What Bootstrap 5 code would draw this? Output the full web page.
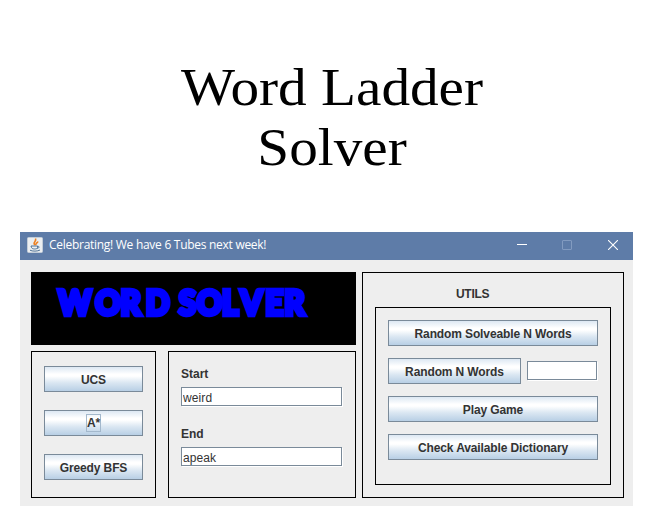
<!DOCTYPE html>
<html lang="en">
<head>
<meta charset="utf-8">
<meta name="viewport" content="width=device-width, initial-scale=1">
<title>Word Ladder Solver</title>
<link href="https://cdn.jsdelivr.net/npm/bootstrap@5.3.0/dist/css/bootstrap.min.css" rel="stylesheet">
<style>
body{background:#fff;color:#333;font:bold 12px/14px "Liberation Sans",Arial,sans-serif;overflow:hidden}
.page-title{font:400 53px/60px "Liberation Serif","Times New Roman",serif;color:#000;padding:57px 0 0 1px;height:232px;transform:scaleX(1.08)}
.app-window{width:613px;height:274px;margin-left:20px;background:#eee}
.title-bar{height:28px;background:#5e7ca8;color:#fff;font:400 12px/26px "Open Sans","Noto Sans",sans-serif;padding:0 15px 2px 7px}
.caption-text{letter-spacing:-.28px;margin-left:6px}
.win-controls{gap:35px}
.app-body{padding:12px 9px 8px 11px;gap:6px}
.left-side{width:325px;gap:6px}
.banner{height:73px;background:#000}
.frame{border:1px solid #000}
.algos{width:125px;height:147px;padding:14px 12px;gap:18px}
.words{width:188px;height:147px;padding:15px 12px 0}
.field-label{display:block;height:20px}
.utils{width:262px;height:226px;padding:14px 12px 12px}
.utils-head{height:20px;padding-left:81px;letter-spacing:-.3px}
.utils-inner{height:178px;padding:12px;gap:12px}
.swing-btn{height:26px;padding:1px 0 0;border:1px solid #7a8a99;border-radius:0;color:#333;font:bold 12px/24px "Liberation Sans",Arial,sans-serif;letter-spacing:-.12px;
background:linear-gradient(#dde8f3 0,#fff 30%,#fff 38%,#dbe7f2 65%,#b8cfe5 100%)}
.focus-box{display:inline-block;border:1px solid #a3b8cc;height:18px;line-height:16px;vertical-align:middle;margin-top:-3px}
.swing-input{height:19px;width:161px;padding:2px 1px 0;border:1px solid #7a8a99;border-radius:0;background:#fff;color:#333;font:400 12px/15px "Liberation Sans",Arial,sans-serif;box-shadow:1px 1px 0 #fff;letter-spacing:.1px}
.swing-input + .field-label{margin-top:21px}
.n-input{width:70px;margin:3px 1px 0 0}
.n-btn{width:133px}
</style>
</head>
<body>
<h1 class="page-title text-center m-0">Word Ladder<br>Solver</h1>
<main class="app-window">
  <header class="title-bar d-flex align-items-center">
    <svg width="16" height="16" viewBox="0 0 16 16" aria-hidden="true">
      <rect x=".5" y=".5" width="15" height="15" rx="1" fill="#eceff1" stroke="#c3cdd8"/>
      <path d="M8 8C5 5.500 10 4.500 8.500 1.500M9 8.200C8 6.600 10.500 6 11 4.500" fill="none" stroke="#ee8122" stroke-width="1.600"/>
      <path d="M4 9h6.500v1.500c0 2-5.500 2-6 0zM10.500 9.300c2.500-.3 2 2-.5 2M3 13.200c2 1.300 8 1.200 10-.2" fill="none" stroke="#507397"/>
    </svg>
    <span class="caption-text">Celebrating! We have 6 Tubes next week!</span>
    <div class="win-controls d-flex ms-auto">
      <svg width="11" height="10" viewBox="0 0 11 10"><path d="M1 4.500h10" stroke="#fff"/></svg>
      <svg width="11" height="10" viewBox="0 0 11 10"><rect x=".5" y=".5" width="9" height="9" rx=".5" fill="none" stroke="#829bc0"/></svg>
      <svg width="10" height="10" viewBox="0 0 10 10"><path d="M0 0l10 10M10 0L0 10" stroke="#fff" stroke-width="1.100"/></svg>
    </div>
  </header>
  <div class="app-body d-flex">
    <div class="left-side d-flex flex-column">
      <div class="banner">
        <svg class="d-block" width="325" height="73" viewBox="0 0 325 73">
          <text transform="scale(.92 1)" y="43.500" x="30 70 97.500 125 149 161 180.500 208 228 255 275.500" font-family="Lato,sans-serif" font-weight="900" font-size="34" fill="#00f" stroke="#00f" stroke-width="4.500">WORD SOLVER</text>
        </svg>
      </div>
      <div class="d-flex justify-content-between">
        <section class="frame algos d-flex flex-column">
          <button class="btn swing-btn">UCS</button>
          <button class="btn swing-btn"><span class="focus-box">A*</span></button>
          <button class="btn swing-btn">Greedy BFS</button>
        </section>
        <section class="frame words">
          <label class="field-label" for="start">Start</label>
          <input id="start" class="form-control swing-input" value="weird">
          <label class="field-label" for="end">End</label>
          <input id="end" class="form-control swing-input" value="apeak">
        </section>
      </div>
    </div>
    <section class="frame utils">
      <div class="utils-head">UTILS</div>
      <div class="frame utils-inner d-flex flex-column">
        <button class="btn swing-btn">Random Solveable N Words</button>
        <div class="d-flex justify-content-between">
          <button class="btn swing-btn n-btn">Random N Words</button>
          <input class="form-control swing-input n-input" aria-label="N">
        </div>
        <button class="btn swing-btn">Play Game</button>
        <button class="btn swing-btn">Check Available Dictionary</button>
      </div>
    </section>
  </div>
</main>
<script src="https://cdn.jsdelivr.net/npm/bootstrap@5.3.0/dist/js/bootstrap.bundle.min.js"></script>
</body>
</html>
